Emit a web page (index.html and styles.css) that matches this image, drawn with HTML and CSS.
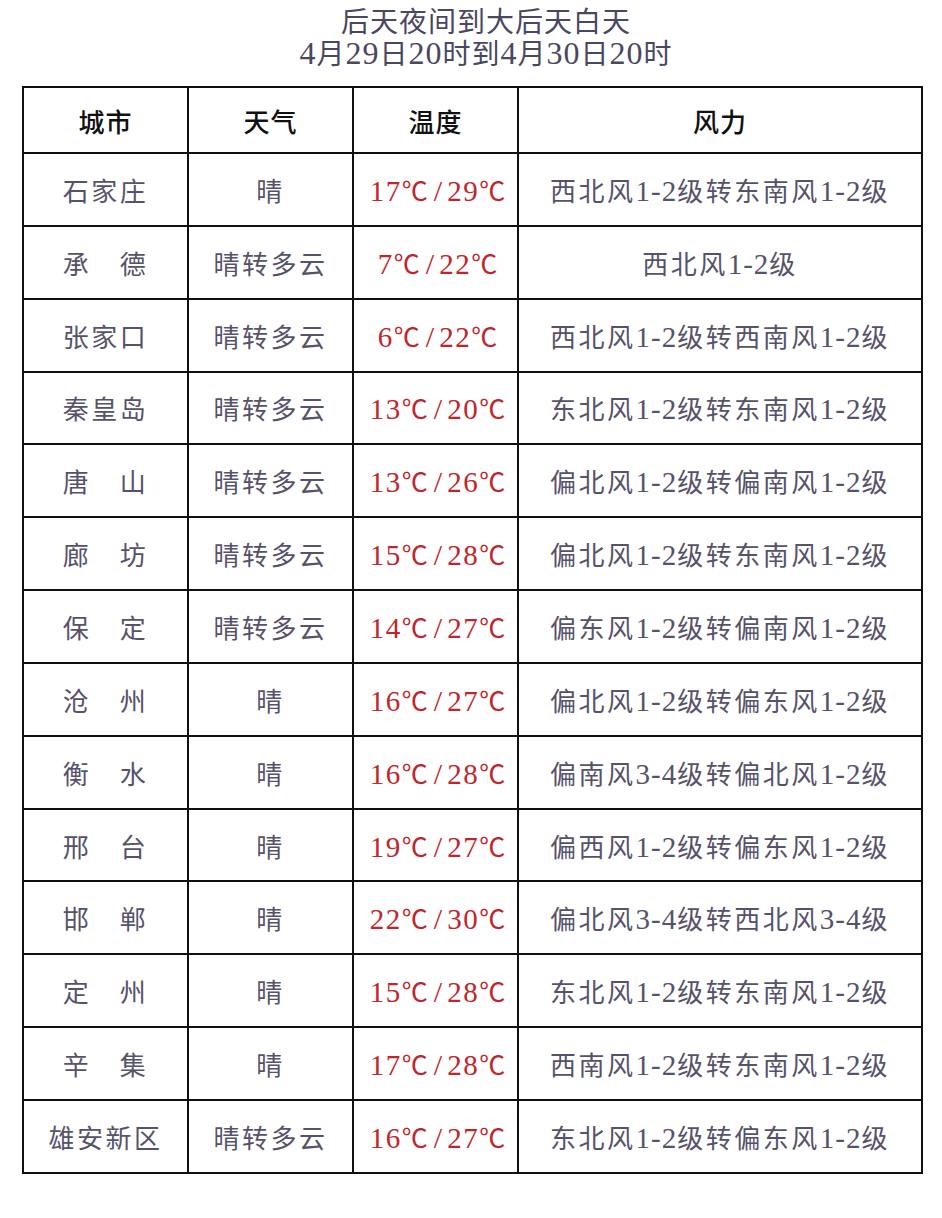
FILE: index.html
```html
<!DOCTYPE html>
<html lang="zh">
<head>
<meta charset="utf-8">
<title>后天夜间到大后天白天</title>
<link rel="stylesheet" href="styles.css">
</head>
<body>
<div class="page">
  <h1 class="title">
    <span class="line">后天夜间到大后天白天</span>
    <span class="line"><span class="tn">4</span>月<span class="tn">29</span>日<span class="tn">20</span>时到<span class="tn">4</span>月<span class="tn">30</span>日<span class="tn">20</span>时</span>
  </h1>
  <table class="forecast">
    <colgroup>
      <col class="c-narrow"><col class="c-narrow"><col class="c-narrow"><col class="c-wide">
    </colgroup>
    <thead>
      <tr><th>城市</th><th>天气</th><th>温度</th><th>风力</th></tr>
    </thead>
    <tbody>
      <tr><td>石家庄</td><td>晴</td><td class="temp"><span class="n">17</span>℃<span class="sl">/</span><span class="n">29</span>℃</td><td>西北风<span class="n">1-2</span>级转东南风<span class="n">1-2</span>级</td></tr>
      <tr><td>承　德</td><td>晴转多云</td><td class="temp"><span class="n">7</span>℃<span class="sl">/</span><span class="n">22</span>℃</td><td>西北风<span class="n">1-2</span>级</td></tr>
      <tr><td>张家口</td><td>晴转多云</td><td class="temp"><span class="n">6</span>℃<span class="sl">/</span><span class="n">22</span>℃</td><td>西北风<span class="n">1-2</span>级转西南风<span class="n">1-2</span>级</td></tr>
      <tr><td>秦皇岛</td><td>晴转多云</td><td class="temp"><span class="n">13</span>℃<span class="sl">/</span><span class="n">20</span>℃</td><td>东北风<span class="n">1-2</span>级转东南风<span class="n">1-2</span>级</td></tr>
      <tr><td>唐　山</td><td>晴转多云</td><td class="temp"><span class="n">13</span>℃<span class="sl">/</span><span class="n">26</span>℃</td><td>偏北风<span class="n">1-2</span>级转偏南风<span class="n">1-2</span>级</td></tr>
      <tr><td>廊　坊</td><td>晴转多云</td><td class="temp"><span class="n">15</span>℃<span class="sl">/</span><span class="n">28</span>℃</td><td>偏北风<span class="n">1-2</span>级转东南风<span class="n">1-2</span>级</td></tr>
      <tr><td>保　定</td><td>晴转多云</td><td class="temp"><span class="n">14</span>℃<span class="sl">/</span><span class="n">27</span>℃</td><td>偏东风<span class="n">1-2</span>级转偏南风<span class="n">1-2</span>级</td></tr>
      <tr><td>沧　州</td><td>晴</td><td class="temp"><span class="n">16</span>℃<span class="sl">/</span><span class="n">27</span>℃</td><td>偏北风<span class="n">1-2</span>级转偏东风<span class="n">1-2</span>级</td></tr>
      <tr><td>衡　水</td><td>晴</td><td class="temp"><span class="n">16</span>℃<span class="sl">/</span><span class="n">28</span>℃</td><td>偏南风<span class="n">3-4</span>级转偏北风<span class="n">1-2</span>级</td></tr>
      <tr><td>邢　台</td><td>晴</td><td class="temp"><span class="n">19</span>℃<span class="sl">/</span><span class="n">27</span>℃</td><td>偏西风<span class="n">1-2</span>级转偏东风<span class="n">1-2</span>级</td></tr>
      <tr><td>邯　郸</td><td>晴</td><td class="temp"><span class="n">22</span>℃<span class="sl">/</span><span class="n">30</span>℃</td><td>偏北风<span class="n">3-4</span>级转西北风<span class="n">3-4</span>级</td></tr>
      <tr><td>定　州</td><td>晴</td><td class="temp"><span class="n">15</span>℃<span class="sl">/</span><span class="n">28</span>℃</td><td>东北风<span class="n">1-2</span>级转东南风<span class="n">1-2</span>级</td></tr>
      <tr><td>辛　集</td><td>晴</td><td class="temp"><span class="n">17</span>℃<span class="sl">/</span><span class="n">28</span>℃</td><td>西南风<span class="n">1-2</span>级转东南风<span class="n">1-2</span>级</td></tr>
      <tr><td>雄安新区</td><td>晴转多云</td><td class="temp"><span class="n">16</span>℃<span class="sl">/</span><span class="n">27</span>℃</td><td>东北风<span class="n">1-2</span>级转偏东风<span class="n">1-2</span>级</td></tr>
    </tbody>
  </table>
</div>
</body>
</html>
```
FILE: styles.css
```css
html, body {
  margin: 0;
  padding: 0;
  background: #ffffff;
}

body {
  font-family: "Liberation Serif", "Noto Sans CJK SC", serif;
  color: #56526a;
}

.page {
  width: 942px;
  padding-top: 7px;
}

.title {
  margin: 0;
  padding-left: 30px;
  display: flex;
  flex-direction: column;
  align-items: center;
  font-weight: normal;
  font-size: 28px;
  line-height: 31px;
  color: #4a4760;
  letter-spacing: 1px;
}

.title .tn {
  font-size: 32px;
}

.forecast {
  margin: 16px 0 0 22px;
  width: 899px;
  border-collapse: collapse;
  table-layout: fixed;
}

.c-narrow { width: 165px; }
.c-wide { width: 404px; }

.forecast th,
.forecast td {
  border: 2px solid #111;
  text-align: center;
  vertical-align: middle;
  padding: 0;
  font-size: 26px;
  letter-spacing: 2.5px;
  white-space: nowrap;
}

.forecast th {
  height: 64px;
  color: #111;
  font-weight: 500;
  letter-spacing: 1px;
}

.forecast td {
  height: 70.85px;
}

.forecast .n {
  font-size: 29px;
  letter-spacing: 1px;
}

.forecast td.temp {
  color: #c1252a;
  padding-left: 8px;
  letter-spacing: 4px;
}

.forecast td.temp .n {
  letter-spacing: 1.5px;
}

.forecast .sl {
  font-size: 30px;
  letter-spacing: 0;
  padding: 0 5px 0 2px;
}
```
